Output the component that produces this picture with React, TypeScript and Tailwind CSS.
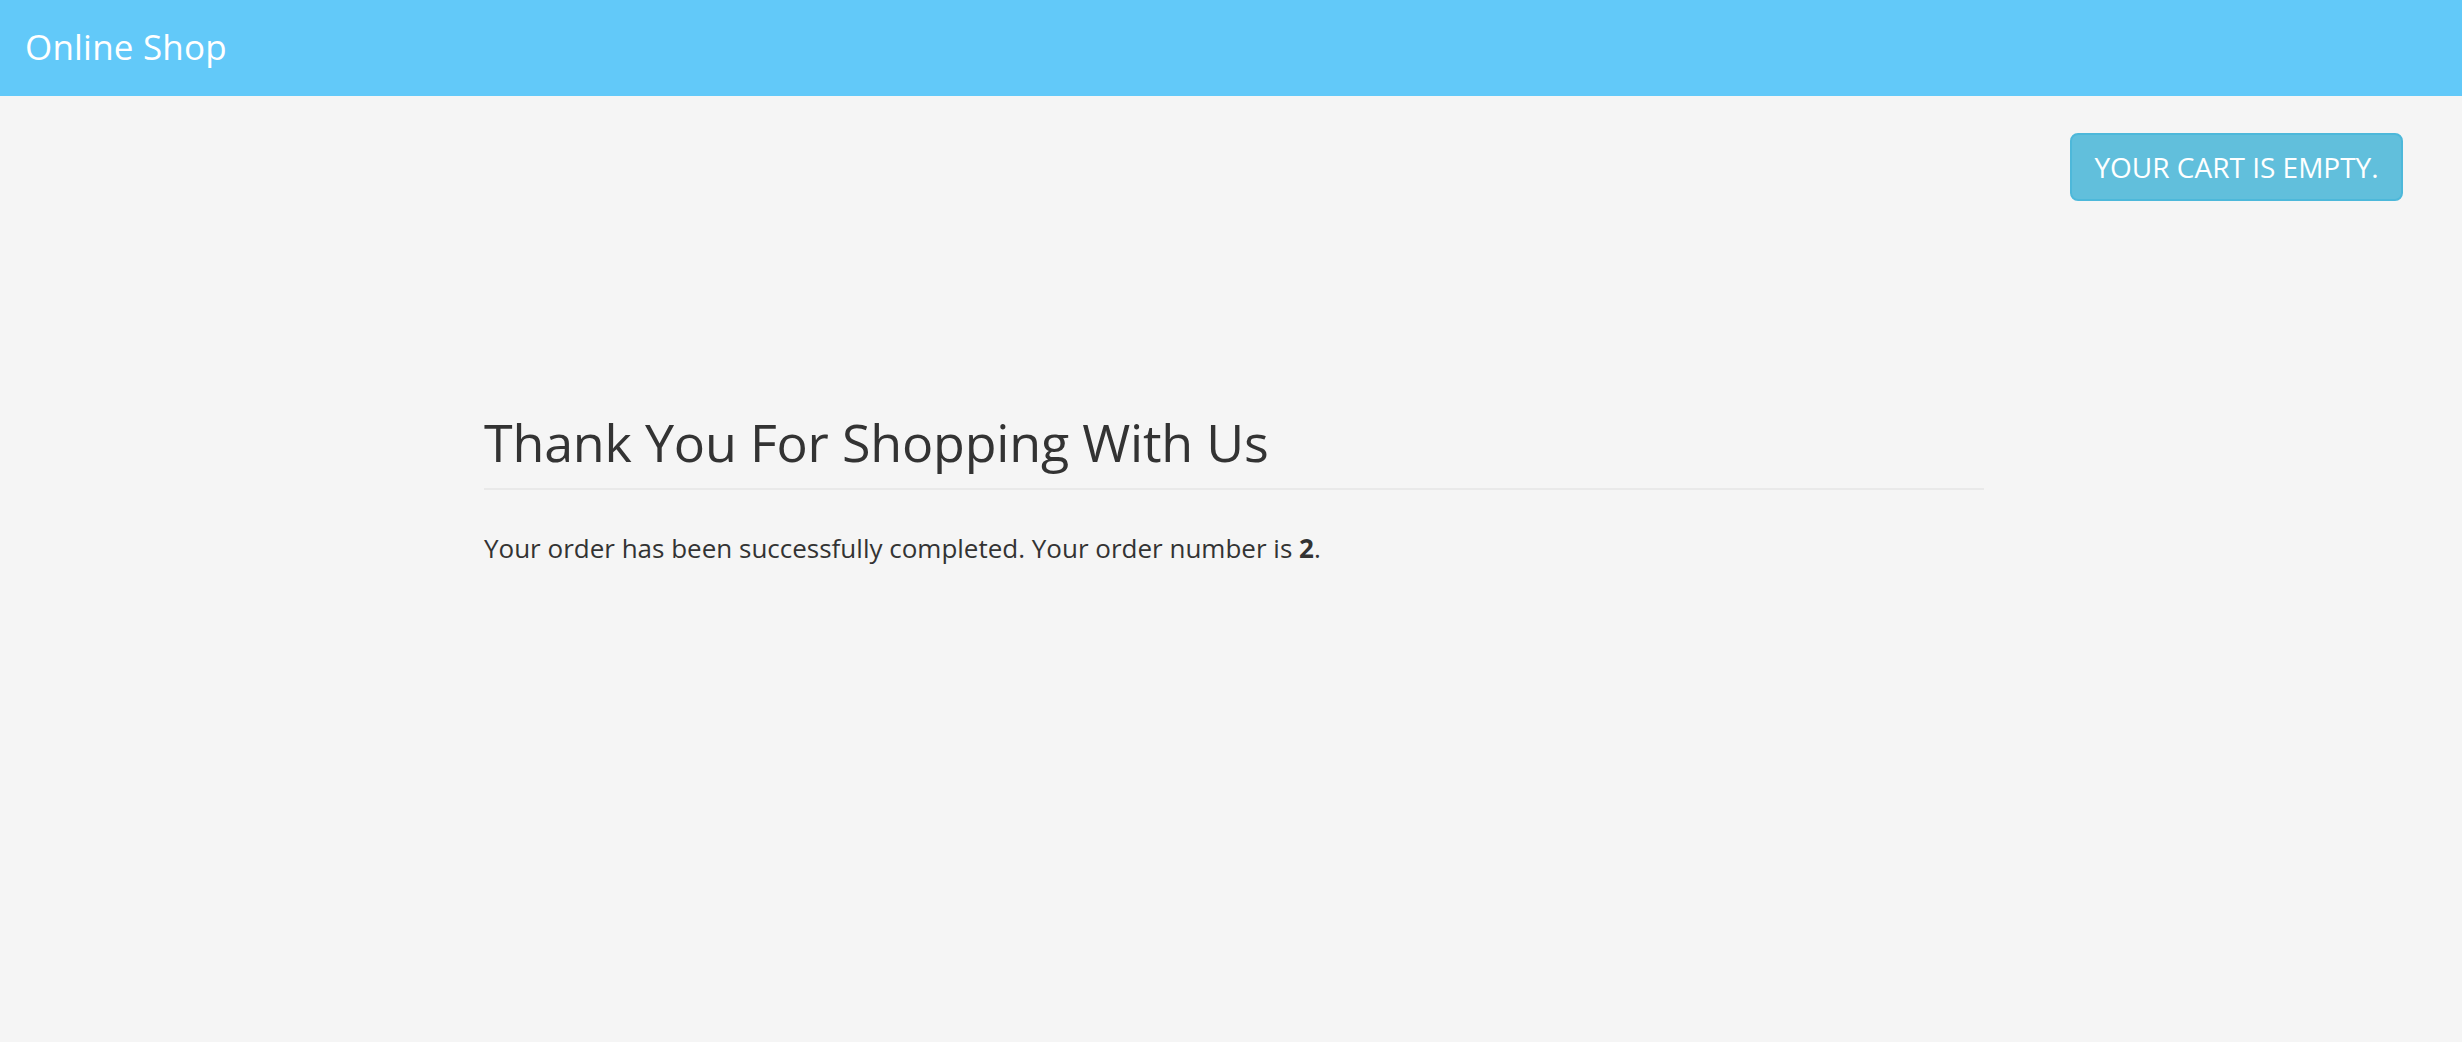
import React from "react";

export default function App() {
  return (
    <div className="min-h-[1042px] w-full bg-[#f5f5f5]" style={{ fontFamily: '"Open Sans", sans-serif' }}>
      <header className="h-[96px] bg-[#62c9f9] px-[25px] pt-[29px]">
        <span className="block text-white text-[35px] leading-none tracking-[0.2px]">Online Shop</span>
      </header>
      <div className="flex justify-end pt-[37px] pr-[59px]">
        <button className="h-[68px] w-[333px] rounded-[8px] border-2 border-[#4db8da] bg-[#61bfdc] text-white text-[28px] uppercase leading-none">
          Your cart is empty.
        </button>
      </div>
      <div className="ml-[484px] w-[1500px] mt-[212px]">
        <h2 className="text-[52px] leading-[1.1] tracking-[-0.2px] text-[#333333]">Thank You For Shopping With Us</h2>
        <div className="mt-[18px] h-[2px] bg-[#e9e9e9]" />
        <p className="mt-[38px] text-[26px] leading-[40px] text-[#333333]">
          Your order has been successfully completed. Your order number is <b className="font-bold">2</b>.
        </p>
      </div>
    </div>
  );
}
